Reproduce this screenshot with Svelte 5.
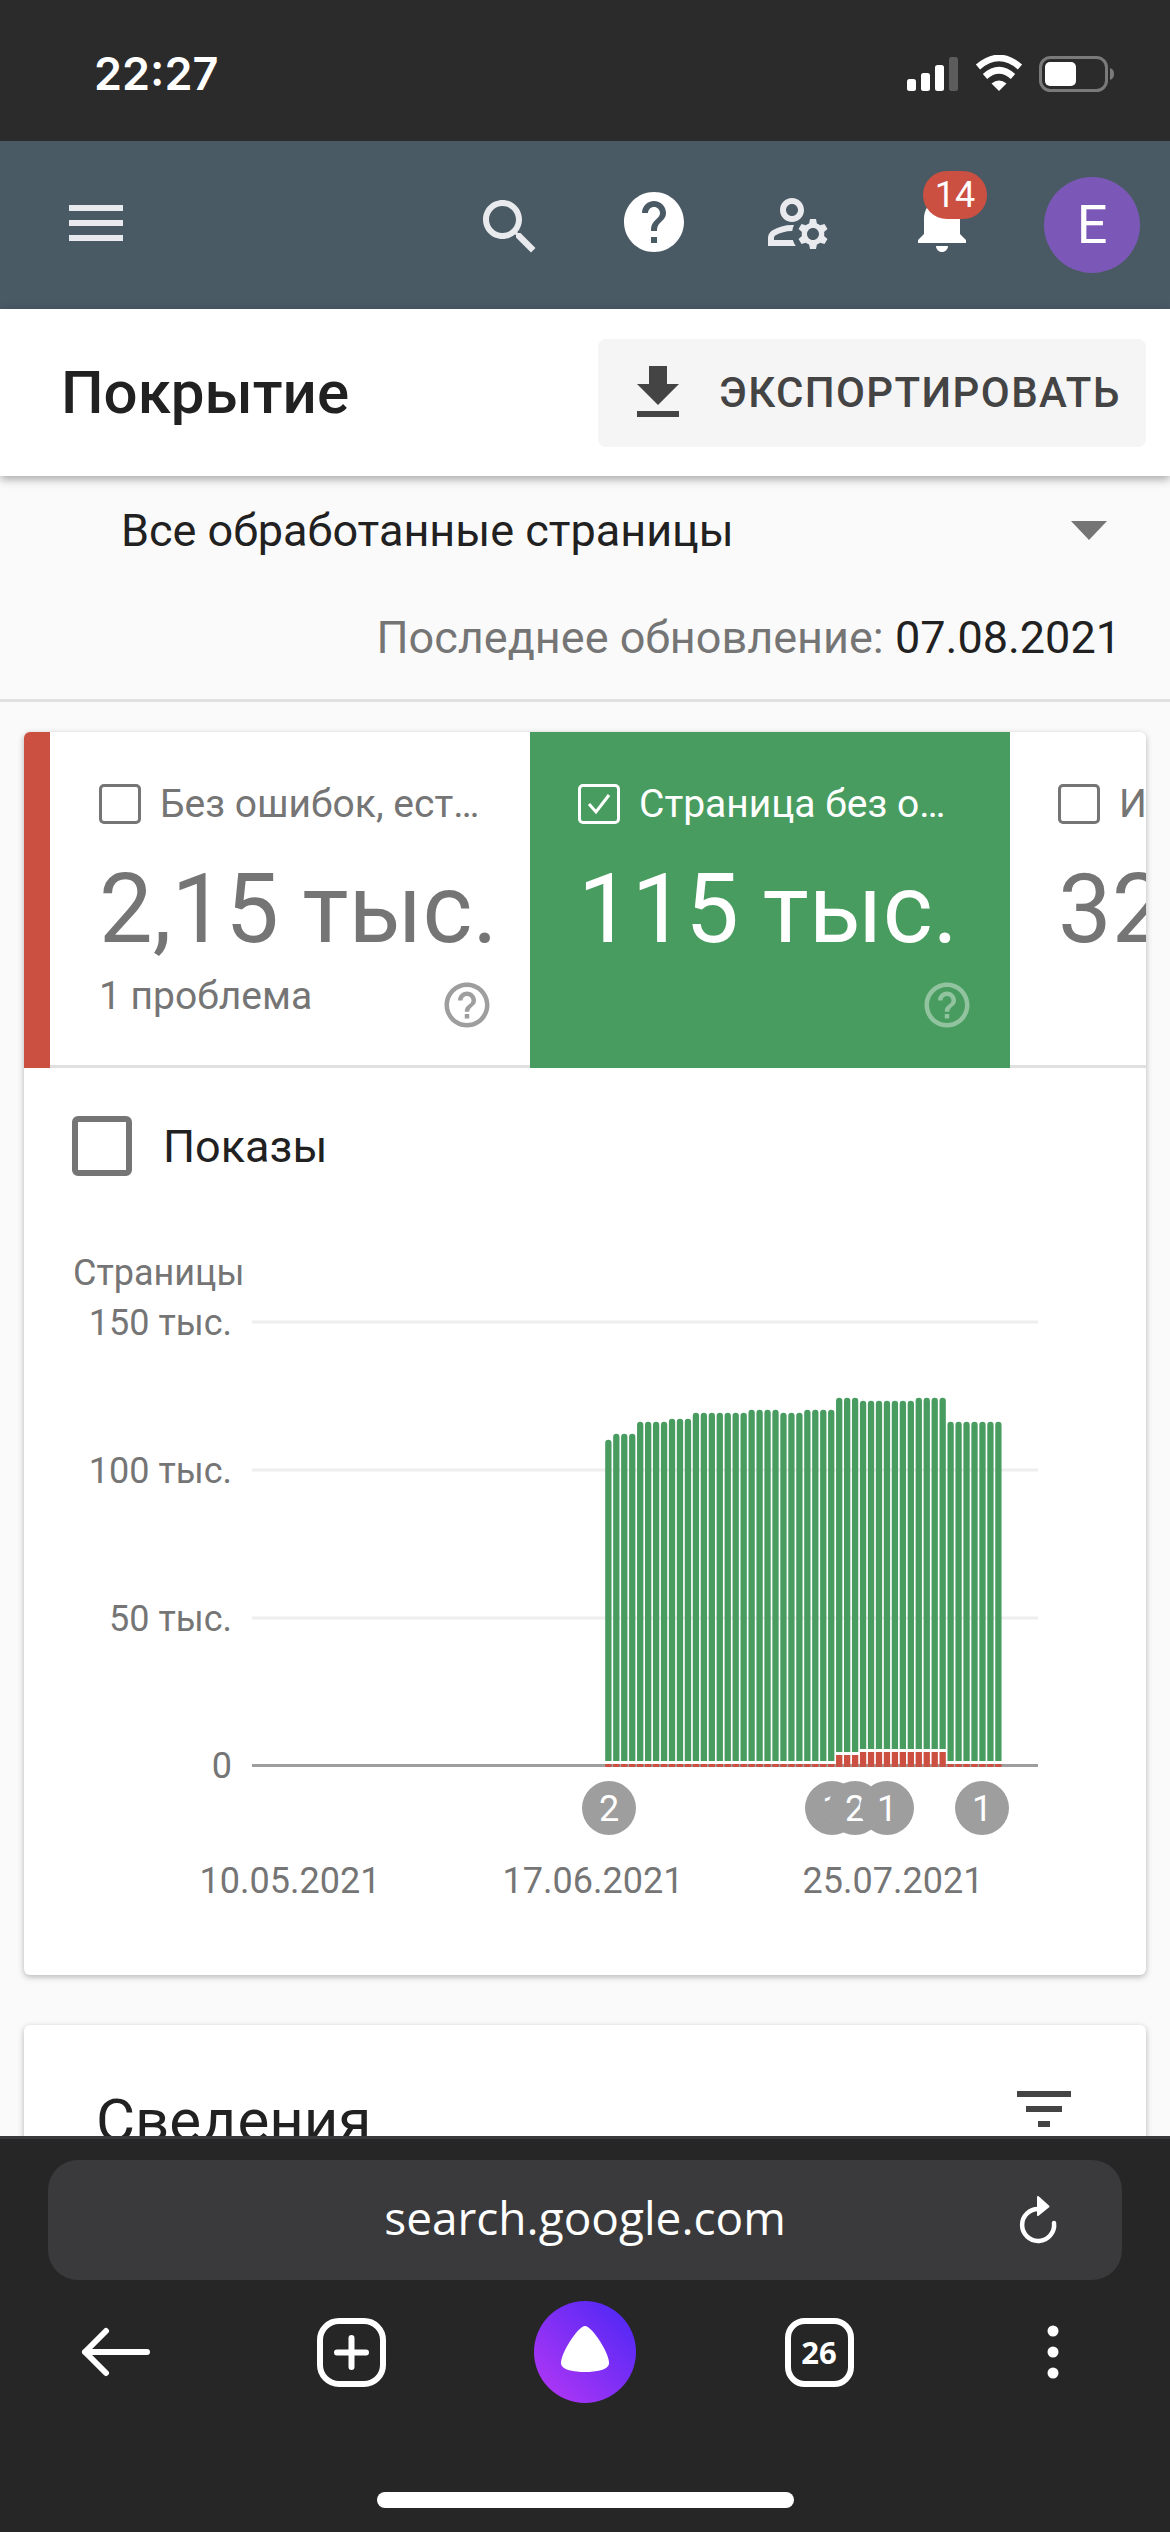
<script>
  // tops of the green bars, read off the reference
  const tops = [
    1440, 1434, 1434, 1434, 1422, 1422, 1422, 1422, 1419, 1419, 1419,
    1413, 1413, 1413, 1413, 1413, 1413, 1413, 1410, 1410, 1410, 1410,
    1413, 1413, 1413, 1410, 1410, 1410, 1410, 1398, 1398, 1398,
    1401, 1401, 1401, 1401, 1401, 1401, 1401, 1398, 1398, 1398, 1398,
    1422, 1422, 1422, 1422, 1422, 1422, 1422
  ];
  const barX = (i) => 605.2 + i * 7.96;
  const greenBottom = (i) => (i >= 32 && i <= 42 ? 1749 : i >= 29 && i <= 31 ? 1752 : 1761);
  const redTop = (i) => (i >= 32 && i <= 42 ? 1752 : i >= 29 && i <= 31 ? 1755 : 1764);

  const grid = [
    { y: 1322, label: '150 тыс.' },
    { y: 1470, label: '100 тыс.' },
    { y: 1618, label: '50 тыс.' }
  ];
  const dates = [
    { x: 290, label: '10.05.2021' },
    { x: 593, label: '17.06.2021' },
    { x: 893, label: '25.07.2021' }
  ];
  const markers = [
    { x: 609, n: 2 },
    { x: 832, n: 1 },
    { x: 855, n: 2 },
    { x: 887, n: 1 },
    { x: 982, n: 1 }
  ];
  const helpOutline = 'M11 18h2v-2h-2v2zm1-16C6.48 2 2 6.48 2 12s4.48 10 10 10 10-4.48 10-10S17.52 2 12 2zm0 18c-4.41 0-8-3.59-8-8s3.59-8 8-8 8 3.59 8 8-3.59 8-8 8zm0-14c-2.21 0-4 1.79-4 4h2c0-1.1.9-2 2-2s2 .9 2 2c0 2-3 1.75-3 5h2c0-2.25 3-2.5 3-5 0-2.21-1.79-4-4-4z';
</script>

<div class="page">
  <div class="status">
    <span class="time">22:27</span>
    <div class="status-icons">
      <svg width="51" height="34" viewBox="0 0 51 34">
        <rect x="0" y="22" width="9" height="12" rx="2.5" fill="#fff" />
        <rect x="14" y="16" width="9" height="18" rx="2.5" fill="#fff" />
        <rect x="28" y="8" width="9" height="26" rx="2.5" fill="#fff" />
        <rect x="42" y="0" width="9" height="34" rx="2.5" fill="#5c5c5c" />
      </svg>
      <svg class="wifi" width="48" height="36" viewBox="0 0 48 36">
        <path d="M3 12 Q24 -6 45 12" fill="none" stroke="#fff" stroke-width="6.5" />
        <path d="M10 21.500 Q24 9 38 21.500" fill="none" stroke="#fff" stroke-width="6.500" />
        <path d="M24 36 L16.500 28.500 Q24 22.500 31.500 28.500 Z" fill="#fff" />
      </svg>
      <svg class="battery" width="76" height="38" viewBox="0 0 76 38">
        <rect x="1.500" y="2.500" width="66" height="33" rx="10" fill="none" stroke="#7a7a7a" stroke-width="3" />
        <rect x="6" y="7" width="31" height="24" rx="5" fill="#fff" />
        <path d="M71 13 C74 14 75 16 75 19 C75 22 74 24 71 25 Z" fill="#7a7a7a" />
      </svg>
    </div>
  </div>

  <header class="appbar">
    <button class="menu" aria-label="Меню">
      <svg width="54" height="36" viewBox="0 0 54 36">
        <path d="M0 0h54v6H0zM0 15h54v6H0zM0 30h54v6H0z" fill="#e8eaed" />
      </svg>
    </button>
    <button class="icon-btn search" aria-label="Поиск">
      <svg width="72" height="72" viewBox="0 0 24 24">
        <path fill="#e8eaed" d="M15.500 14h-.79l-.28-.27C15.410 12.590 16 11.110 16 9.500 16 5.910 13.090 3 9.500 3S3 5.910 3 9.500 5.910 16 9.500 16c1.610 0 3.090-.59 4.230-1.570l.27.28v.79l5 4.990L20.490 19l-4.990-5zm-6 0C7.010 14 5 11.990 5 9.500S7.010 5 9.500 5 14 7.010 14 9.500 11.990 14 9.500 14z" />
      </svg>
    </button>
    <button class="icon-btn" aria-label="Справка">
      <svg width="72" height="72" viewBox="0 0 24 24">
        <path fill="#fff" d="M12 2C6.480 2 2 6.480 2 12s4.480 10 10 10 10-4.480 10-10S17.520 2 12 2zm1 17h-2v-2h2v2zm2.070-7.750l-.9.920C13.450 12.900 13 13.500 13 15h-2v-.5c0-1.100.45-2.100 1.170-2.830l1.240-1.260c.37-.36.59-.86.59-1.410 0-1.100-.9-2-2-2s-2 .9-2 2H8c0-2.210 1.790-4 4-4s4 1.790 4 4c0 .88-.36 1.680-.93 2.250z" />
      </svg>
    </button>
    <button class="icon-btn" aria-label="Настройки">
      <svg width="72" height="72" viewBox="0 0 24 24" fill="#e8eaed">
        <path d="M4 18v-.65c0-.34.160-.66.410-.81C6.100 15.530 8.030 15 10 15c.03 0 .05 0 .08.010.1-.7.3-1.370.59-1.980-.22-.02-.44-.03-.67-.03-2.420 0-4.680.67-6.610 1.820-.88.520-1.390 1.500-1.390 2.530V20h9.260c-.42-.6-.75-1.280-.97-2H4z" />
        <path d="M10 12c2.210 0 4-1.790 4-4s-1.790-4-4-4-4 1.790-4 4 1.790 4 4 4zm0-6c1.100 0 2 .9 2 2s-.9 2-2 2-2-.9-2-2 .9-2 2-2z" />
        <path d="M20.750 16c0-.22-.03-.42-.06-.63l1.140-1.010-1-1.730-1.450.49c-.32-.27-.68-.48-1.080-.63L18 11h-2l-.3 1.490c-.4.150-.76.360-1.080.630l-1.450-.49-1 1.730 1.140 1.010c-.03.210-.06.410-.06.630s.03.420.06.630l-1.140 1.010 1 1.730 1.450-.49c.32.270.68.480 1.080.630L16 21h2l.3-1.490c.4-.15.760-.36 1.080-.63l1.450.49 1-1.730-1.140-1.010c.03-.21.060-.41.060-.63zM17 18c-1.100 0-2-.9-2-2s.9-2 2-2 2 .9 2 2-.9 2-2 2z" />
      </svg>
    </button>
    <button class="icon-btn bell" aria-label="Уведомления">
      <svg width="72" height="72" viewBox="0 0 24 24">
        <path fill="#fff" d="M12 22c1.100 0 2-.9 2-2h-4c0 1.100.89 2 2 2zm6-6v-5c0-3.070-1.640-5.640-4.500-6.320V4c0-.83-.67-1.500-1.500-1.500s-1.500.67-1.500 1.500v.68C7.630 5.360 6 7.920 6 11v5l-2 2v1h16v-1l-2-2z" />
      </svg>
      <span class="badge">14</span>
    </button>
    <div class="avatar">E</div>
  </header>

  <div class="titlebar">
    <h1>Покрытие</h1>
    <button class="export">
      <svg width="72" height="72" viewBox="0 0 24 24">
        <path fill="#444" d="M19 9h-4V3H9v6H5l7 7 7-7zM5 18v2h14v-2H5z" />
      </svg>
      <span>ЭКСПОРТИРОВАТЬ</span>
    </button>
  </div>

  <main class="content">
    <div class="filter">
      <span>Все обработанные страницы</span>
      <i class="caret"></i>
    </div>
    <div class="updated">Последнее обновление: <b>07.08.2021</b></div>

    <section class="card">
      <div class="tiles">
        <div class="tile error">
          <div class="tile-head"><i class="box"></i><span>Без ошибок, есть предупреждения</span></div>
          <div class="tile-num">2,15 тыс.</div>
          <div class="tile-foot">
            <span>1 проблема</span>
            <svg width="54" height="54" viewBox="0 0 24 24"><path fill="#9e9e9e" d={helpOutline} /></svg>
          </div>
        </div>
        <div class="tile valid">
          <div class="tile-head">
            <i class="box">
              <svg width="36" height="36" viewBox="0 0 36 36">
                <path d="M8 18 L15 26 L28 9" fill="none" stroke="#fff" stroke-width="3" />
              </svg>
            </i>
            <span>Страница без ошибок</span>
          </div>
          <div class="tile-num">115 тыс.</div>
          <div class="tile-foot">
            <span></span>
            <svg width="54" height="54" viewBox="0 0 24 24"><path fill="#fff" fill-opacity="0.4" d={helpOutline} /></svg>
          </div>
        </div>
        <div class="tile excluded">
          <div class="tile-head"><i class="box"></i><span>Исключено</span></div>
          <div class="tile-num">32,3 тыс.</div>
        </div>
      </div>

      <label class="toggle">
        <i class="box-big"></i>
        <span>Показы</span>
      </label>

      <svg class="chart" width="1122" height="660" viewBox="24 1240 1122 660">
        <text class="axis" x="73" y="1285">Страницы</text>
        {#each grid as g}
          <rect x="252" y={g.y - 1.5} width="786" height="3" fill="#eeeeee" />
          <text class="axis" x="232" y={g.y + 13} text-anchor="end">{g.label}</text>
        {/each}
        <rect x="252" y="1764" width="786" height="3" fill="#9e9e9e" />
        <text class="axis" x="232" y="1778" text-anchor="end">0</text>

        {#each tops as top, i}
          <path d="M{barX(i)} {greenBottom(i)} V{top + 3} a3.150 3.150 0 0 1 6.300 0 V{greenBottom(i)} Z" fill="#489c60" />
          <rect x={barX(i)} y={redTop(i)} width="6.300" height={1767 - redTop(i)} fill="#cc5042" />
        {/each}

        {#each markers as m}
          <circle cx={m.x} cy="1808" r="27" fill="#9e9e9e" />
          <text class="marker" x={m.x} y="1821" text-anchor="middle">{m.n}</text>
        {/each}
        {#each dates as d}
          <text class="axis" x={d.x} y="1893" text-anchor="middle">{d.label}</text>
        {/each}
      </svg>
    </section>

    <section class="card details">
      <h2>Сведения</h2>
      <svg width="72" height="72" viewBox="0 0 24 24">
        <path fill="#444" d="M10 18h4v-2h-4v2zM3 6v2h18V6H3zm3 7h12v-2H6v2z" />
      </svg>
    </section>
  </main>

  <footer class="browser">
    <div class="urlbar">
      <span class="url">search.google.com</span>
      <svg class="reload" width="48" height="48" viewBox="0 0 48 48">
        <path d="M25 13 A16 16 0 1 0 40 27" fill="none" stroke="#fff" stroke-width="4.500" stroke-linecap="round" />
        <path d="M24 1 L34.500 10.500 L24 19 Z" fill="#fff" stroke="#fff" stroke-width="2" stroke-linejoin="round" />
      </svg>
    </div>
    <div class="toolbar">
      <svg width="72" height="54" viewBox="0 0 72 54">
        <path d="M25 6 L4 27 L25 48 M4 27 H66" fill="none" stroke="#fff" stroke-width="6" stroke-linecap="round" stroke-linejoin="round" />
      </svg>
      <svg width="69" height="69" viewBox="0 0 69 69">
        <rect x="3" y="3" width="63" height="63" rx="19" fill="none" stroke="#fff" stroke-width="6" />
        <path d="M34.500 20 V49 M20 34.500 H49" fill="none" stroke="#fff" stroke-width="6" stroke-linecap="round" />
      </svg>
      <svg width="102" height="102" viewBox="0 0 102 102">
        <defs>
          <linearGradient id="alice" x1="1" y1="0" x2="0" y2="1">
            <stop offset="0.1" stop-color="#5328f5" />
            <stop offset="0.9" stop-color="#ad36f5" />
          </linearGradient>
        </defs>
        <circle cx="51" cy="51" r="51" fill="url(#alice)" />
        <path d="M51 25 C58 25 76 53 75 63 C74 69 62 71 51 71 C40 71 28 69 27 63 C26 53 44 25 51 25 Z" fill="#fff" />
      </svg>
      <div class="tabs">26</div>
      <svg width="12" height="54" viewBox="0 0 12 54">
        <circle cx="6" cy="6" r="5.500" fill="#fff" />
        <circle cx="6" cy="27" r="5.500" fill="#fff" />
        <circle cx="6" cy="48" r="5.500" fill="#fff" />
      </svg>
    </div>
    <div class="home"></div>
  </footer>
</div>

<style>
  :global(body) {
    margin: 0;
    background: #fafafa;
  }

  .page {
    width: 1170px;
    height: 2532px;
    display: flex;
    flex-direction: column;
    overflow: hidden;
    font-family: Roboto, sans-serif;
    color: #212121;
  }

  button {
    border: 0;
    padding: 0;
    background: none;
    font: inherit;
    color: inherit;
  }

  svg {
    display: block;
    flex: none;
  }

  /* phone status bar */
  .status {
    flex: none;
    height: 141px;
    background: #2b2b2b;
    display: flex;
    justify-content: space-between;
    padding: 52px 55px 0 94px;
    box-sizing: border-box;
  }

  .time {
    font-family: Inter, sans-serif;
    font-weight: 600;
    font-size: 45px;
    line-height: 44px;
    color: #fff;
  }

  .status-icons {
    display: flex;
    align-items: flex-start;
    padding-top: 5px;
  }

  .wifi {
    margin: -2px 0 0 17px;
  }

  .battery {
    margin: -2px 0 0 16px;
  }

  /* app bar */
  .appbar {
    flex: none;
    height: 168px;
    background: #4a5a65;
    display: flex;
    align-items: center;
    box-sizing: border-box;
    padding-right: 30px;
  }

  .menu {
    margin: -4px auto 0 69px;
  }

  .icon-btn {
    position: relative;
    width: 144px;
    display: flex;
    justify-content: center;
    margin-top: -6px;
  }

  .icon-btn.search {
    margin-top: 4px;
  }

  .badge {
    position: absolute;
    left: 53px;
    top: -15px;
    width: 64px;
    height: 48px;
    border-radius: 24px;
    background: #cc5042;
    color: #fff;
    font-size: 36px;
    line-height: 48px;
    text-align: center;
  }

  .avatar {
    width: 96px;
    height: 96px;
    margin: 0 0 0 30px;
    border-radius: 50%;
    background: #7b58b8;
    color: #fff;
    font-size: 54px;
    line-height: 96px;
    text-align: center;
  }

  /* page title */
  .titlebar {
    position: relative;
    z-index: 1;
    flex: none;
    height: 167px;
    background: #fff;
    box-shadow: 0 3px 9px rgba(0, 0, 0, 0.35);
    display: flex;
    align-items: center;
    justify-content: space-between;
    padding: 0 24px 0 61px;
    box-sizing: border-box;
  }

  h1 {
    margin: 0;
    font-size: 60px;
    font-weight: 500;
  }

  .export {
    width: 548px;
    height: 108px;
    border-radius: 8px;
    background: #f5f5f5;
    display: flex;
    align-items: center;
    padding-left: 24px;
    box-sizing: border-box;
    color: #444;
    font-size: 42px;
    font-weight: 500;
    letter-spacing: 1.4px;
    white-space: nowrap;
  }

  .export span {
    margin-left: 25px;
  }

  /* scrolling area */
  .content {
    flex: 1;
    min-height: 0;
    overflow: hidden;
    background: #fafafa;
  }

  .filter {
    height: 108px;
    display: flex;
    align-items: center;
    justify-content: space-between;
    padding: 0 63px 0 121px;
    font-size: 45px;
  }

  .caret {
    width: 0;
    height: 0;
    border-left: 18px solid transparent;
    border-right: 18px solid transparent;
    border-top: 19px solid #757575;
  }

  .updated {
    height: 118px;
    box-sizing: border-box;
    padding: 30px 49px 0 0;
    text-align: right;
    font-size: 45px;
    line-height: 48px;
    color: #757575;
    border-bottom: 3px solid #e0e0e0;
  }

  .updated b {
    font-weight: 400;
    color: #212121;
  }

  .card {
    margin: 30px 24px 50px;
    background: #fff;
    border-radius: 6px;
    box-shadow: 0 2px 6px rgba(0, 0, 0, 0.28);
    overflow: hidden;
  }

  .tiles {
    height: 336px;
    display: flex;
    box-sizing: border-box;
    border-bottom: 3px solid #e0e0e0;
  }

  .tile {
    flex: none;
    width: 480px;
    height: 336px;
    box-sizing: border-box;
    padding: 42px 36px 0 48px;
    color: #757575;
  }

  .tile.error {
    width: 504px;
    margin-right: 2px;
    border-left: 26px solid #cc5042;
    padding-left: 49px;
    padding-right: 34px;
  }

  .tile.valid {
    background: #489c60;
    color: #fff;
  }

  .tile-head {
    display: flex;
    align-items: center;
    height: 60px;
    font-size: 39px;
  }

  .tile-head span {
    flex: 0 1 auto;
    min-width: 0;
    width: 326px;
    margin-left: 19px;
    overflow: hidden;
    text-overflow: ellipsis;
    white-space: nowrap;
  }

  .box {
    flex: none;
    box-sizing: border-box;
    width: 42px;
    height: 40px;
    border: 3px solid #757575;
    border-radius: 5px;
    display: flex;
    align-items: center;
    justify-content: center;
  }

  .valid .box {
    border-color: #fff;
  }

  .tile-num {
    margin-top: 21px;
    font-size: 95.500px;
    line-height: 108px;
    white-space: nowrap;
  }

  .tile-foot {
    display: flex;
    justify-content: space-between;
    margin-top: 8px;
    font-size: 39px;
    line-height: 50px;
  }

  .tile-foot svg {
    margin-top: 7px;
  }

  .toggle {
    display: flex;
    align-items: center;
    height: 60px;
    padding: 48px 0 0 48px;
    font-size: 45px;
  }

  .box-big {
    box-sizing: border-box;
    width: 60px;
    height: 60px;
    border: 6px solid #757575;
    border-radius: 6px;
    margin-right: 31px;
  }

  .chart {
    margin: 64px 0 75px;
  }

  .axis {
    font-size: 36px;
    fill: #757575;
  }

  .marker {
    font-size: 36px;
    fill: #fff;
  }

  .details {
    display: flex;
    justify-content: space-between;
    height: 400px;
    margin-top: 0;
    padding: 48px 66px 0 72px;
    box-sizing: border-box;
  }

  h2 {
    margin: 12px 0 0;
    font-size: 60px;
    font-weight: 400;
    line-height: 72px;
  }

  /* browser chrome */
  .browser {
    flex: none;
    height: 396px;
    box-sizing: border-box;
    background: #262626;
    border-top: 3px solid #3a3a3c;
    padding: 21px 48px 0;
  }

  .urlbar {
    position: relative;
    height: 120px;
    border-radius: 30px;
    background: #3a3a3c;
    display: flex;
    align-items: center;
    justify-content: center;
  }

  .url {
    font-family: "Open Sans", sans-serif;
    font-size: 46px;
    line-height: 54px;
    margin-top: -6px;
    color: #fff;
  }

  .reload {
    position: absolute;
    right: 60px;
    top: 36px;
  }

  /* five equal slots across the whole width */
  .toolbar {
    display: grid;
    grid-template-columns: repeat(5, 234px);
    justify-items: center;
    align-items: center;
    height: 102px;
    margin: 21px 0 0 -48px;
  }

  .tabs {
    box-sizing: border-box;
    width: 69px;
    height: 69px;
    border: 6px solid #fff;
    border-radius: 20px;
    color: #fff;
    font-family: "Open Sans", sans-serif;
    font-weight: 700;
    font-size: 31px;
    line-height: 57px;
    text-align: center;
  }

  .home {
    width: 417px;
    height: 16px;
    border-radius: 8px;
    background: #fff;
    margin: 89px auto 0;
  }
</style>
